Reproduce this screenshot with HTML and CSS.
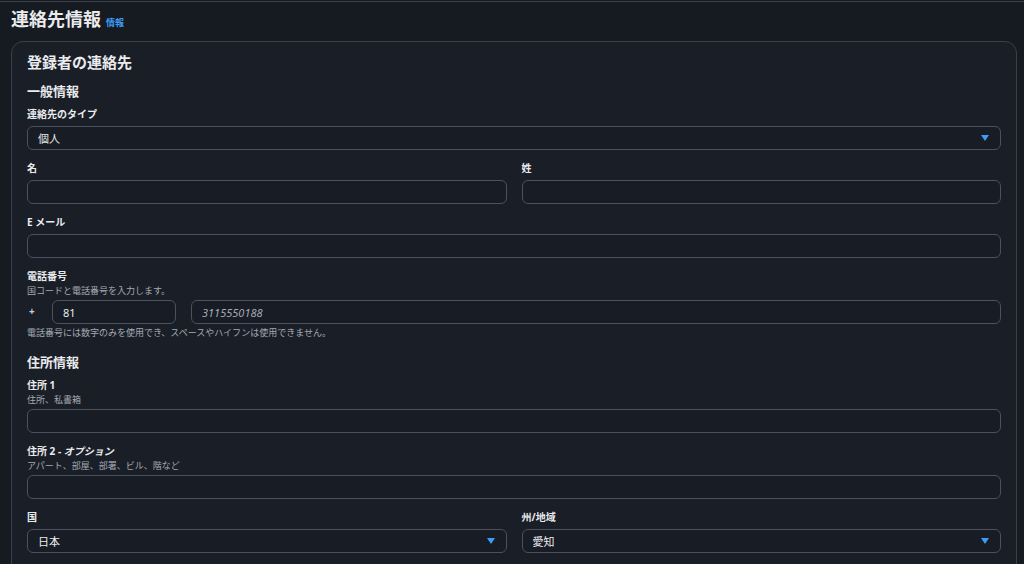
FILE: index.html
```html
<!DOCTYPE html>
<html lang="ja">
<head>
    <meta charset="UTF-8">
    <meta name="viewport" content="width=device-width, initial-scale=1.0">
    <title>連絡先情報</title>
    <link rel="stylesheet" href="styles.css">
</head>
<body>
    <div class="page">
        <header class="page-header">
            <h1>連絡先情報</h1>
            <a class="info-link" href="#">情報</a>
        </header>

        <section class="panel">
            <h2>登録者の連絡先</h2>

            <h3>一般情報</h3>
            <div class="field">
                <label class="label">連絡先のタイプ</label>
                <div class="select">
                    <span>個人</span>
                    <span class="caret"></span>
                </div>
            </div>

            <div class="row">
                <div class="field">
                    <label class="label">名</label>
                    <input class="input" type="text">
                </div>
                <div class="field">
                    <label class="label">姓</label>
                    <input class="input" type="text">
                </div>
            </div>

            <div class="field">
                <label class="label">E メール</label>
                <input class="input" type="text">
            </div>

            <div class="field">
                <label class="label">電話番号</label>
                <p class="desc">国コードと電話番号を入力します。</p>
                <div class="phone">
                    <span class="plus">+</span>
                    <input class="input code" type="text" value="81">
                    <input class="input number" type="text" placeholder="3115550188">
                </div>
                <p class="hint">電話番号には数字のみを使用でき、スペースやハイフンは使用できません。</p>
            </div>

            <h3 class="section-gap">住所情報</h3>
            <div class="field">
                <label class="label">住所 1</label>
                <p class="desc">住所、私書箱</p>
                <input class="input" type="text">
            </div>

            <div class="field">
                <label class="label">住所 2 - <i>オプション</i></label>
                <p class="desc">アパート、部屋、部署、ビル、階など</p>
                <input class="input" type="text">
            </div>

            <div class="row">
                <div class="field">
                    <label class="label">国</label>
                    <div class="select">
                        <span>日本</span>
                        <span class="caret"></span>
                    </div>
                </div>
                <div class="field">
                    <label class="label">州/地域</label>
                    <div class="select">
                        <span>愛知</span>
                        <span class="caret"></span>
                    </div>
                </div>
            </div>
        </section>
    </div>
</body>
</html>
```

FILE: styles.css
```css
:root {
    --page-bg: #161a21;
    --panel-bg: #191e27;
    --field-bg: #171c25;
    --border: #4b525e;
    --panel-border: #3a404b;
    --text: #e9ebed;
    --muted: #a4aab3;
    --accent: #3d9cf5;
}

* {
    box-sizing: border-box;
}

body {
    margin: 0;
    background-color: var(--page-bg);
    color: var(--text);
    font-family: "Noto Sans", "Noto Sans CJK JP", sans-serif;
    overflow: hidden;
}

.page {
    border-top: 1px solid #3a3f48;
    margin-top: 1px;
    padding: 0 7px 0 11px;
}

/* Title row */
.page-header {
    display: flex;
    align-items: baseline;
    gap: 5px;
    height: 39px;
    padding-top: 3px;
}

.page-header h1 {
    margin: 0;
    font-size: 18px;
    font-weight: 700;
}

.info-link {
    color: var(--accent);
    font-size: 9px;
    font-weight: 700;
    text-decoration: none;
}

/* Main container */
.panel {
    background-color: var(--panel-bg);
    border: 1px solid var(--panel-border);
    border-radius: 12px;
    padding: 8px 15px 20px 15px;
}

.panel h2 {
    margin: 0 0 8px;
    font-size: 15px;
    font-weight: 700;
    line-height: 24px;
}

.panel h3 {
    margin: 0 0 6px;
    font-size: 13px;
    font-weight: 700;
    line-height: 18px;
}

.panel h3.section-gap {
    margin-top: 13px;
}

.field {
    display: flex;
    flex-direction: column;
    margin-bottom: 10px;
}

.label {
    font-size: 10px;
    font-weight: 700;
    line-height: 16px;
    margin-bottom: 4px;
}

.label i {
    font-style: italic;
}

.desc {
    margin: -4px 0 2px;
    font-size: 9px;
    line-height: 14px;
    color: var(--muted);
}

.hint {
    margin: 2px 0 0;
    font-size: 9px;
    line-height: 14px;
    color: var(--muted);
}

.row {
    display: grid;
    grid-template-columns: 1fr 1fr;
    gap: 15px;
}

.input,
.select {
    height: 24px;
    border: 1px solid var(--border);
    border-radius: 6px;
    background-color: var(--field-bg);
    color: var(--text);
    font-family: inherit;
    font-size: 11px;
    padding: 0 10px;
    width: 100%;
}

.input::placeholder {
    color: var(--muted);
    font-style: italic;
}

.select {
    display: flex;
    align-items: center;
    justify-content: space-between;
    padding-right: 11px;
}

/* Blue dropdown triangle */
.caret {
    width: 0;
    height: 0;
    border-left: 4px solid transparent;
    border-right: 4px solid transparent;
    border-top: 6px solid var(--accent);
}

.phone {
    display: flex;
    align-items: center;
    gap: 15px;
}

.plus {
    width: 10px;
    padding-left: 2px;
    font-size: 10px;
    font-weight: 700;
    color: #c9ced4;
    margin-top: -2px;
}

.phone .code {
    width: 124px;
    flex: none;
}

.phone .number {
    flex: 1;
}
```
